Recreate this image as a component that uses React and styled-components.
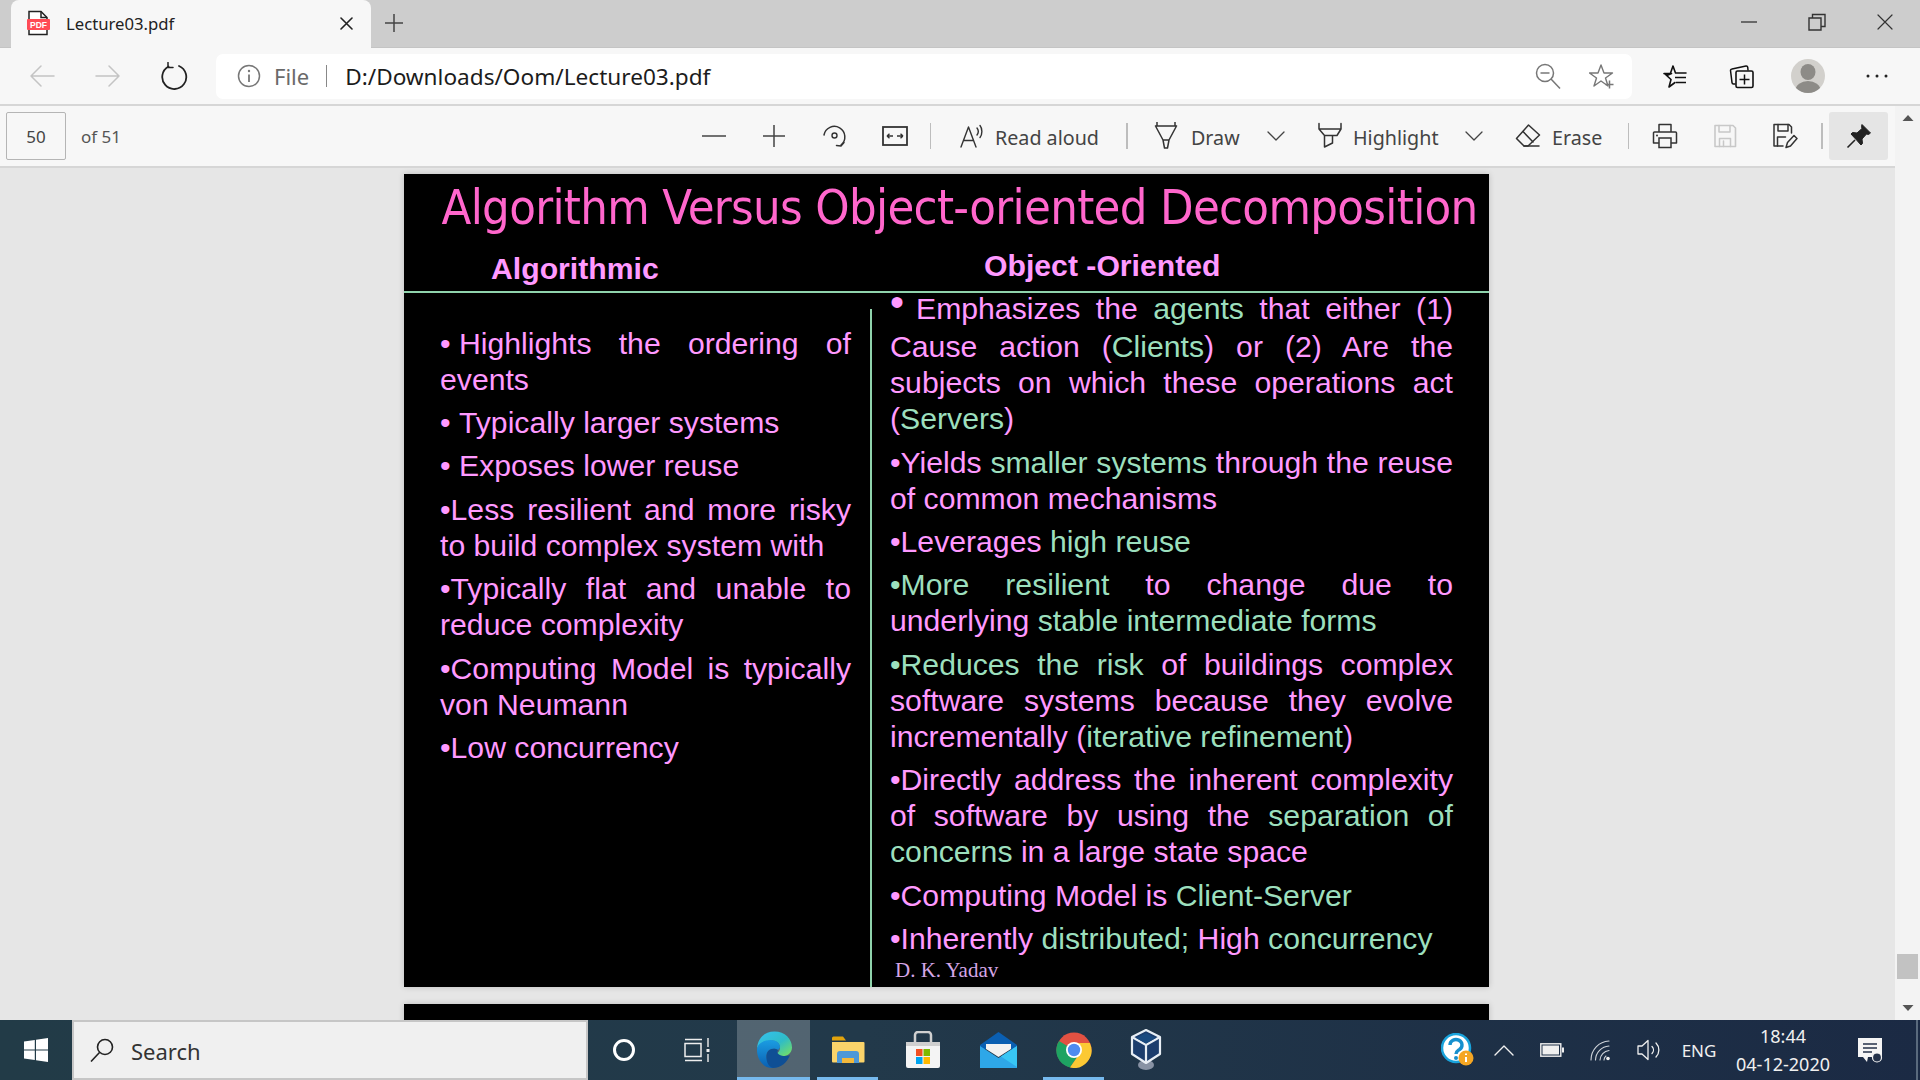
import React from "react";
import styled, { createGlobalStyle } from "styled-components";

const Global = createGlobalStyle`
  html, body { margin: 0; padding: 0; height: 100%; overflow: hidden; background: #e6e6e6; }
  #root { height: 100%; }
  * { box-sizing: border-box; }
`;

const UI = `"Noto Sans", "Open Sans", sans-serif`;
const PINK = "#ff99ff";
const GREEN = "#9cdfbd";

const Shell = styled.div`
  width: 1920px; height: 1080px; display: flex; flex-direction: column; overflow: hidden;
  font-family: ${UI}; color: #222;
`;

/* ---------- tab strip ---------- */
const TabStrip = styled.div`
  height: 48px; flex: none; background: #cdcdcd; display: flex; align-items: stretch; padding-left: 11px;
  border-bottom: 1px solid #c4c4c4;
`;
const Tab = styled.div`
  width: 360px; background: #f7f7f7; border-radius: 8px 8px 0 0; display: flex; align-items: center;
  padding: 0 18px 2px 15px; margin-bottom: -1px;
`;
const TabTitle = styled.span`
  font-size: 16.7px; margin-left: 15px; flex: 1; color: #222;
`;
const NewTab = styled.div`
  width: 46px; display: flex; align-items: center; justify-content: center; padding-bottom: 2px;
`;
const WindowButtons = styled.div`
  margin-left: auto; display: flex; align-items: flex-start; padding-right: 1px;
`;
const WinBtn = styled.div`
  width: 68px; height: 43px; display: flex; align-items: center; justify-content: center;
`;

/* ---------- address bar ---------- */
const AddressRow = styled.div`
  height: 58px; flex: none; background: #f7f7f7; display: flex; align-items: center;
  border-bottom: 2px solid #d6d6d6;
`;
const NavBtn = styled.div`
  width: 66px; height: 44px; display: flex; align-items: center; justify-content: center; flex: none;
`;
const NavGroup = styled.div`
  display: flex; padding-left: 9px; margin-right: 9px;
`;
const Omnibox = styled.div`
  width: 1416px; height: 45px; background: #fff; border-radius: 7px; display: flex; align-items: center;
  padding: 0 3px 0 21px; flex: none;
`;
const FileLabel = styled.span`
  font-size: 22px; color: #6a6a6a; margin-left: 13px;
`;
const OmniSep = styled.div`
  width: 1px; height: 22px; background: #888; margin: 0 18px 0 17px;
`;
const Url = styled.span`
  font-size: 22.6px; color: #1c1c1c; flex: 1;
`;
const OmniIcon = styled.div`
  width: 54px; display: flex; justify-content: center; flex: none;
`;
const RowIcons = styled.div`
  display: flex; align-items: center; padding-left: 10px;
`;
const RowIcon = styled.div`
  width: ${p => p.$w || 66.5}px; display: flex; justify-content: center; flex: none;
`;

/* ---------- body: toolbar + pages, with the scrollbar beside both ---------- */
const Workspace = styled.div`
  flex: 1; min-height: 0; display: flex;
`;
const MainCol = styled.div`
  flex: 1; min-width: 0; display: flex; flex-direction: column;
`;

/* ---------- pdf toolbar ---------- */
const PdfBar = styled.div`
  height: 62px; flex: none; background: #f7f7f7; display: flex; align-items: center;
  border-bottom: 2px solid #d6d6d6; padding: 0 7px 0 6px;
`;
const PageInput = styled.div`
  width: 60px; height: 48px; background: #f7f7f7; border: 1px solid #b5b5b5; border-radius: 2px;
  display: flex; align-items: center; justify-content: center; font-size: 17px; color: #444;
`;
const PageCount = styled.span`
  font-size: 17px; color: #555; margin-left: 15px;
`;
const ToolGroup = styled.div`
  margin-left: auto; display: flex; align-items: center; height: 48px;
`;
const ToolBtn = styled.div`
  width: ${p => p.$w}px; height: 48px; flex: none; display: flex; align-items: center; justify-content: center;
  background: ${p => (p.$active ? "#e5e5e5" : "transparent")}; border-radius: 3px;
`;
const TextTool = styled.div`
  width: ${p => p.$w}px; padding-left: ${p => p.$pad}px; height: 48px; flex: none; display: flex; align-items: center;
  gap: ${p => p.$gap}px; font-size: 19.7px; color: #444;
`;
const ToolLabel = styled.span`
  position: relative; top: 1px;
`;
const ToolSep = styled.div`
  width: ${p => p.$w || 1}px; height: 26px; background: #bdbdbd; flex: none; margin: 0 6px;
`;

/* ---------- viewer ---------- */
const Pages = styled.div`
  flex: 1; min-height: 0; overflow: hidden; background: #e6e6e6; display: flex; flex-direction: column; align-items: center;
  gap: 17px; padding: 6px 2px 0 0;
`;
const Slide = styled.div`
  width: 1085px; height: ${p => p.$h || 813}px; background: #000; flex: none; display: flex; flex-direction: column;
  box-shadow: 0 0 6px rgba(0,0,0,.18); font-family: "Liberation Sans", Arial, sans-serif; color: ${PINK};
`;
const SlideHead = styled.div`
  height: 119px; flex: none; border-bottom: 2px solid #8fd3ac;
`;
const Title = styled.h1`
  margin: 0; padding: 1px 0 0 37.5px; height: 65px; line-height: 64px; font-size: 48.5px; font-weight: 400; white-space: nowrap;
  letter-spacing: -.68px; font-family: "DejaVu Sans", sans-serif; font-stretch: condensed; color: #ff66cc;
`;
const SubRow = styled.div`
  display: flex;
`;
const Sub = styled.h2`
  margin: ${p => p.$top}px 0 0 0; padding-left: ${p => p.$pad}px; width: ${p => p.$w}px; font-size: 30.2px; line-height: 40px; font-weight: 700;
`;
const Columns = styled.div`
  flex: 1; min-height: 0; display: flex;
`;
const LeftCol = styled.div`
  width: 466px; flex: none; padding: 32.6px 19px 0 36px;
`;
const Rule = styled.div`
  width: 2px; flex: none; background: #8fd3ac; margin-top: 16px;
`;
const RightCol = styled.div`
  flex: 1; padding: 0 36px 0 18px; margin-top: -2px;
`;
const Item = styled.p`
  margin: 0 0 7.4px; font-size: 30.2px; line-height: 36px; text-align: justify; color: ${PINK};
`;
const LeadLine = styled(Item)`
  margin-bottom: 2.3px; text-align-last: justify;
`;
const G = styled.span`
  color: ${GREEN};
`;
const Dot = styled.span`
  display: inline-block; width: ${p => p.$w}px;
`;
const BigDot = styled.span`
  display: inline-block; width: 26px; font-size: 40px; line-height: 0; vertical-align: 3px;
`;
const Credit = styled.div`
  font-family: "Liberation Serif", "Times New Roman", serif; font-size: 21px; line-height: 24px; color: #d5a6e6;
  margin: -6px 0 0 5px;
`;

const Scrollbar = styled.div`
  width: 25px; flex: none; background: #f3f3f3; display: flex; flex-direction: column; align-items: center;
`;
const ScrollArrow = styled.div`
  height: 24px; flex: none; display: flex; align-items: center; justify-content: center;
`;
const ScrollThumb = styled.div`
  width: 21px; height: 25px; background: #c2c2c2; margin-top: auto; margin-bottom: 17px;
`;

/* ---------- taskbar ---------- */
const Taskbar = styled.div`
  height: 60px; flex: none; display: flex; align-items: stretch; position: relative; z-index: 2;
  background: linear-gradient(90deg, #223b47 0%, #22394a 45%, #1b2a44 100%); color: #fff;
`;
const StartBtn = styled.div`
  width: 72px; flex: none; display: flex; align-items: center; justify-content: center;
`;
const SearchBox = styled.div`
  width: 516px; flex: none; background: #f0f0f0; border: 2px solid #c6c6c6; display: flex; align-items: center;
  padding-left: 16px; gap: 17px; font-size: 22px; color: #333;
`;
const SearchLabel = styled.span`
  position: relative; top: 1px;
`;
const TaskIcon = styled.div`
  width: ${p => p.$w}px; flex: none; display: flex; align-items: center; justify-content: center; position: relative;
  padding-right: ${p => p.$pr || 0}px;
  background: ${p => (p.$on ? "rgba(255,255,255,.22)" : "transparent")};
  ${p => p.$line ? `&::after { content: ""; position: absolute; left: ${p.$on ? 0 : "7px"}; right: ${p.$on ? 0 : "7px"}; bottom: 0; height: 3px; background: #76b9ed; }` : ""}
`;
const Tray = styled.div`
  margin-left: auto; display: flex; align-items: center; padding-right: 2px;
`;
const TrayItem = styled.div`
  width: ${p => p.$w}px; flex: none; display: flex; align-items: center; justify-content: center;
  padding-left: ${p => p.$pl || 0}px; padding-right: ${p => p.$pr || 0}px;
`;
const Lang = styled.span`
  font-size: 17px; color: #f0f0f0;
`;
const Clock = styled.div`
  width: 110px; flex: none; display: flex; flex-direction: column; align-items: center; font-size: 18px; line-height: 28px; color: #f0f0f0;
`;
const NotifyEdge = styled.div`
  width: 2px; height: 100%; background: #5a6a7d; flex: none; margin-left: 15px;
`;

/* ---------- icons ---------- */
const Svg = ({ s = 24, w, h, vb, children, ...rest }) => (
  <svg width={w || s} height={h || s} viewBox={vb || `0 0 ${s} ${s}`} fill="none" {...rest}>{children}</svg>
);
const line = (c, sw = 1.5) => ({ stroke: c, strokeWidth: sw, fill: "none", strokeLinecap: "round", strokeLinejoin: "round" });
const D = "#333";

const PdfIcon = () => (
  <Svg w={25} h={26} vb="0 0 25 26">
    <path d="M3 24.5V1.5h12l6 6v17z" fill="#fff" stroke="#222" strokeWidth="1.5" />
    <path d="M15 1.5v6h6" stroke="#222" strokeWidth="1.5" />
    <rect x="1" y="9" width="23" height="11" rx="1" fill="#ff4b55" />
    <text x="12.5" y="18" textAnchor="middle" fontSize="8.5" fontWeight="700" fill="#fff" fontFamily="Liberation Sans">PDF</text>
  </Svg>
);
const Cross = ({ s = 14, c = "#222", sw = 1.6 }) => (
  <Svg s={s}><path d={`M1 1L${s - 1} ${s - 1}M${s - 1} 1L1 ${s - 1}`} {...line(c, sw)} /></Svg>
);
const Plus = ({ s = 22, c = "#444", sw = 1.5 }) => (
  <Svg s={s}><path d={`M${s / 2} 1V${s - 1}M1 ${s / 2}H${s - 1}`} stroke={c} strokeWidth={sw} /></Svg>
);
const Minus = ({ s = 24, c = "#444", sw = 1.5 }) => (
  <Svg s={s}><path d={`M0 ${s / 2}H${s}`} stroke={c} strokeWidth={sw} /></Svg>
);
const Restore = () => (
  <Svg s={18}><path d="M1 5h12v12H1zM4.5 5V1.500h12.500V13.500H13" stroke="#333" strokeWidth="1.400" /></Svg>
);
const Arrow = ({ flip }) => (
  <Svg s={26} style={{ transform: flip ? "scaleX(-1)" : "none" }}>
    <path d="M25 13H2M12 3L2 13l10 10" {...line("#c4c4c4", 1.5)} />
  </Svg>
);
const Refresh = () => (
  <Svg s={28}>
    <path d="M8.500 4.500A12 12 0 1 0 19 4" {...line("#222", 1.8)} />
    <path d="M8 0.500V5.500H13" {...line("#222", 1.5)} />
  </Svg>
);
const Info = () => (
  <Svg s={24}>
    <circle cx="12" cy="12" r="10.500" stroke="#777" strokeWidth="1.500" />
    <path d="M12 10.500V18" stroke="#777" strokeWidth="1.800" />
    <circle cx="12" cy="7" r="1.200" fill="#777" />
  </Svg>
);
const ZoomOut = () => (
  <Svg s={26}>
    <circle cx="10" cy="10" r="8.500" stroke="#777" strokeWidth="1.500" />
    <path d="M16 16L25 25.500" stroke="#777" strokeWidth="1.500" />
    <path d="M5.500 10h9" stroke="#777" strokeWidth="1.500" />
  </Svg>
);
const StarPlus = () => (
  <Svg s={26}>
    <path d="M12 2l3 8h8.500l-7 5 2.500 8-7-5-7 5 2.500-8-7-5H9z" {...line("#777", 1.400)} />
    <path d="M20.500 17.500v8M16.500 21.500h8" stroke="#777" strokeWidth="1.500" />
  </Svg>
);
const Favorites = () => (
  <Svg s={26}>
    <path d="M11 3l2.500 7H24M6 12l-4-1.500h7.500zM7 24l2-7.500L3 11M7 24l6-4.500" {...line("#111", 1.600)} />
    <path d="M13 14.500H24M14 19.500H24" stroke="#111" strokeWidth="1.600" />
    <path d="M11 3L8.500 10" stroke="#111" strokeWidth="1.600" />
  </Svg>
);
const Collections = () => (
  <Svg s={26}>
    <path d="M6 21H4.500a1.500 1.500 0 0 1-1.500-1.300L1.500 7.500A1.500 1.500 0 0 1 3 6l14-3a1.500 1.500 0 0 1 1.700 1.200L19 7" {...line("#111", 1.500)} />
    <rect x="7" y="8" width="17" height="16.500" rx="1.500" stroke="#111" strokeWidth="1.600" />
    <path d="M15.500 11.500v10M10.500 16.500h10" stroke="#111" strokeWidth="1.500" />
  </Svg>
);
const Avatar = () => (
  <Svg s={34}>
    <defs><clipPath id="av"><circle cx="17" cy="17" r="17" /></clipPath></defs>
    <circle cx="17" cy="17" r="17" fill="#d2d0cc" />
    <g clipPath="url(#av)">
      <ellipse cx="17" cy="13" rx="7.500" ry="8" fill="#8d8b87" />
      <ellipse cx="17" cy="31" rx="12.500" ry="9" fill="#8d8b87" />
    </g>
  </Svg>
);
const Dots = () => (
  <Svg s={24}>
    <circle cx="3" cy="12" r="1.500" fill="#222" /><circle cx="12" cy="12" r="1.500" fill="#222" /><circle cx="21" cy="12" r="1.500" fill="#222" />
  </Svg>
);
const RotateIcon = () => (
  <Svg s={26}>
    <path d="M2 12A10.500 10.500 0 1 1 19 22" {...line(D, 1.500)} />
    <circle cx="12.500" cy="12.500" r="2.500" stroke={D} strokeWidth="1.400" />
    <path d="M22 19.500l-3 3.500-4.500-.5" {...line(D, 1.500)} />
  </Svg>
);
const FitIcon = () => (
  <Svg w={26} h={24} vb="0 0 26 24">
    <rect x="1" y="3" width="24" height="18" stroke={D} strokeWidth="1.800" />
    <path d="M5 12h6M5 12l2.500-2.200M5 12l2.500 2.200M21 12h-6M21 12l-2.500-2.200M21 12l-2.500 2.200" stroke={D} strokeWidth="1.400" />
  </Svg>
);
const ReadIcon = () => (
  <Svg s={24}>
    <path d="M1 23L8.500 3 16 23M3.500 16.500H13.500" {...line(D, 1.400)} />
    <path d="M17 4c1.500 2 1.500 5 0 7M20 1.500c2.500 3 2.500 9 0 12" {...line(D, 1.400)} />
  </Svg>
);
const DrawIcon = () => (
  <Svg w={24} h={28} vb="0 0 24 28">
    <path d="M1.500 4L9 18h6l7.500-14M1.500 4H22.500M3 0v4M21 0v4M9 18l1.500 8h3l1.500-8" {...line(D, 1.500)} />
  </Svg>
);
const HighlightIcon = () => (
  <Svg w={26} h={28} vb="0 0 26 28">
    <path d="M2 1.500V7h22V1.500M2 7l5.500 6.500H20L24 7M7.500 13.500V25l8-4v-7.500" {...line(D, 1.500)} />
  </Svg>
);
const Chevron = () => (
  <Svg w={18} h={10} vb="0 0 18 10"><path d="M1 1l8 8 8-8" {...line("#444", 1.300)} /></Svg>
);
const EraseIcon = () => (
  <Svg s={26}>
    <path d="M13.500 2L24.500 12 13 23H9L1.500 15.500z" {...line(D, 1.500)} />
    <path d="M8 8.500L18 19M9 23h15" {...line(D, 1.500)} />
  </Svg>
);
const PrintIcon = () => (
  <Svg s={26}>
    <path d="M7 9V1.500h12V9M6.500 20H1.500V10a1 1 0 0 1 1-1h21a1 1 0 0 1 1 1v10h-5" {...line(D, 1.500)} />
    <rect x="7" y="15" width="12" height="9.500" stroke={D} strokeWidth="1.500" />
    <circle cx="5" cy="12.500" r="1" fill={D} />
  </Svg>
);
const SaveIcon = ({ c = "#c8c8c8" }) => (
  <Svg s={24}>
    <path d="M2 1.500h18l2.500 2.500v18.500H2z" {...line(c, 1.600)} />
    <path d="M6 1.500V8h11V1.500M6.500 22.500V14.500h11v8M10.500 17v5.500" {...line(c, 1.500)} />
  </Svg>
);
const SaveAsIcon = () => (
  <Svg s={26}>
    <path d="M11 23H2V1.500h15l2.500 2.500V10" {...line(D, 1.500)} />
    <path d="M6 1.500V8h10V1.500M5.500 23V14h8" {...line(D, 1.500)} />
    <path d="M14 24.500l1.500-5L22 12.500l3 3-6.500 7.500z" {...line(D, 1.500)} />
  </Svg>
);
const PinIcon = () => (
  <Svg s={26}>
    <path d="M16 1.500l8.500 8.500-2 1.500-2-.5-4.500 5 .5 4.500-1.500 1.500-4-4.500L5 11l1.500-1.500 4.500.5 5-4.500-.5-2z" fill="#222" stroke="#222" strokeWidth="1" strokeLinejoin="round" />
    <path d="M9 17L1.500 24.500" stroke="#222" strokeWidth="1.600" />
  </Svg>
);
const Tri = ({ down }) => (
  <Svg w={12} h={8} vb="0 0 12 8" style={{ transform: down ? "rotate(180deg)" : "none" }}>
    <path d="M6 1l5.500 6H.5z" fill="#555" />
  </Svg>
);
const WinLogo = () => (
  <Svg s={24}>
    <path d="M0 3.500l10.800-1.500v9.500H0zM12 1.800L24 0v11.500H12zM0 12.500h10.800V22L0 20.500zM12 12.500h12V24l-12-1.800z" fill="#fff" />
  </Svg>
);
const SearchGlass = () => (
  <Svg s={24}>
    <circle cx="15" cy="9" r="7.500" stroke="#222" strokeWidth="1.600" />
    <path d="M9.500 14.500L1 23.500" stroke="#222" strokeWidth="1.600" />
  </Svg>
);
const Cortana = () => (
  <Svg s={24}><circle cx="12" cy="12" r="9.500" stroke="#fff" strokeWidth="3" /></Svg>
);
const TaskView = () => (
  <Svg s={26}>
    <path d="M1 2.500h17M1 23.500h17" stroke="#eee" strokeWidth="1.400" />
    <rect x="1" y="6.500" width="16" height="13" stroke="#eee" strokeWidth="1.500" />
    <path d="M24 1v9" stroke="#eee" strokeWidth="1.400" />
    <rect x="22.500" y="12" width="3" height="3" fill="#eee" />
    <path d="M24 17v8" stroke="#eee" strokeWidth="1.400" />
  </Svg>
);
const Edge = () => (
  <Svg s={38}>
    <defs>
      <linearGradient id="e1" x1="0" y1="0" x2="1" y2="1"><stop offset="0" stopColor="#35c1f1" /><stop offset=".55" stopColor="#2fbcc7" /><stop offset="1" stopColor="#7ce25a" /></linearGradient>
      <linearGradient id="e2" x1="0" y1="0" x2="0" y2="1"><stop offset="0" stopColor="#1b9de2" /><stop offset="1" stopColor="#0a5fb2" /></linearGradient>
    </defs>
    <path d="M2 19C2 8 9 .5 19.500 .5 30 .5 37 8 37 16.500c0 6-5 8.500-9 8.500-3.500 0-6-1-6-2 0-1.500 3-2 3-6.500 0-4-3.500-7-8-7C8 9.500 2 14 2 19z" fill="url(#e1)" />
    <path d="M2 19c0-6 6-10 14-10 5 0 9 3 9 7 0 1-1 2-2 3-3-2-9-2-11 3-2 6 2 12 7 15C9 38 2 29 2 19z" fill="url(#e2)" />
    <path d="M12 22c2-5 8-5 11-3-1 1.500-1 3 1 4.500 3 2 8 2 11 .5-2.500 7-9 13-17 13-5-1-8-9-6-15z" fill="#0f4f95" />
  </Svg>
);
const Folder = () => (
  <Svg w={34} h={28} vb="0 0 34 28">
    <path d="M1 2a1.500 1.500 0 0 1 1.500-1.500H12l3 4H1z" fill="#e2a30c" />
    <path d="M1 6h31.500a1 1 0 0 1 1 1v18.500a1 1 0 0 1-1 1H2a1 1 0 0 1-1-1z" fill="#fbd46a" />
    <path d="M6 27v-9a3 3 0 0 1 3-3h16a3 3 0 0 1 3 3v9h-5v-5H11v5z" fill="#4d98d8" />
    <rect x="11" y="22" width="12" height="5" fill="#f3b93c" />
  </Svg>
);
const Store = () => (
  <Svg w={36} h={38} vb="0 0 36 38">
    <path d="M10 11V4a3 3 0 0 1 3-3h10a3 3 0 0 1 3 3v7" stroke="#d0d0d0" strokeWidth="2.500" />
    <path d="M1 11h34v24a2 2 0 0 1-2 2H3a2 2 0 0 1-2-2z" fill="#f4f4f4" />
    <rect x="1" y="11" width="34" height="4" fill="#cfcfcf" />
    <rect x="11" y="18" width="6.500" height="7" fill="#f25022" /><rect x="18.500" y="18" width="6.500" height="7" fill="#7fba00" />
    <rect x="11" y="26" width="6.500" height="7" fill="#00a4ef" /><rect x="18.500" y="26" width="6.500" height="7" fill="#ffb900" />
  </Svg>
);
const Mail = () => (
  <Svg w={37} h={36} vb="0 0 37 36">
    <path d="M0 13L18.500 0 37 13v4H0z" fill="#0a5fb2" />
    <path d="M6 12h25v5l-12.500 8L6 17z" fill="#f2f2f2" />
    <path d="M0 14l18.500 12L37 14v22H0z" fill="#2ea7e8" />
    <path d="M37 14L21 24.500 37 35z" fill="#38c6f4" />
  </Svg>
);
const Chrome = () => (
  <Svg s={36}>
    <circle cx="18" cy="18" r="17.500" fill="#e25142" />
    <path d="M18 18L3 9a17.500 17.500 0 0 0 11 26.500l7-10z" fill="#1ea362" />
    <path d="M18 11h15.800a17.500 17.500 0 0 1-19.800 24.500L22 24z" fill="#fcc934" />
    <circle cx="18" cy="18" r="8" fill="#fff" /><circle cx="18" cy="18" r="6.200" fill="#4d8bf0" />
  </Svg>
);
const VBox = () => (
  <Svg w={32} h={42} vb="0 0 32 42">
    <ellipse cx="16" cy="36" rx="8" ry="5" fill="#8892a4" />
    <path d="M16 1L30 8v17l-14 9-14-9V8z" fill="#1c3d6d" stroke="#e8eef5" strokeWidth="2.200" strokeLinejoin="round" />
    <path d="M2 8l14 8 14-8M16 16v18" stroke="#e8eef5" strokeWidth="2.200" />
    <path d="M16 4l10 5-10 5.500L6 9z" fill="#1a4a80" />
  </Svg>
);
const HelpBadge = () => (
  <Svg s={34}>
    <circle cx="15" cy="15" r="14" fill="#fff" />
    <circle cx="15" cy="15" r="14" stroke="#19a3dc" strokeWidth="2.500" />
    <path d="M9 12a6 5.500 0 1 1 9.500 4.500c-2 1.500-3.500 2-3.500 4.500" stroke="#1790ce" strokeWidth="3.400" fill="none" />
    <circle cx="15" cy="25" r="2" fill="#1790ce" />
    <circle cx="25" cy="25" r="7.500" fill="#f5a623" />
    <path d="M25 24v5M25 20.500v1.600" stroke="#fff" strokeWidth="2" />
  </Svg>
);
const Caret = () => (
  <Svg w={20} h={11} vb="0 0 20 11"><path d="M1 10l9-9 9 9" {...line("#f0f0f0", 1.400)} /></Svg>
);
const Battery = () => (
  <Svg w={24} h={14} vb="0 0 24 14">
    <rect x=".8" y=".8" width="20" height="12.400" stroke="#f0f0f0" strokeWidth="1.400" />
    <rect x="2.500" y="2.500" width="16.500" height="9" fill="#f0f0f0" />
    <rect x="22" y="4.500" width="2" height="5" fill="#f0f0f0" />
  </Svg>
);
const Wifi = () => (
  <Svg s={22}>
    <path d="M1 21A19 19 0 0 1 19 2M5.500 21A14.500 14.500 0 0 1 19 7M10 21a10 10 0 0 1 9-9.500M14 21a5.500 5.500 0 0 1 2-4" {...line("#cfd4da", 1.100)} />
    <circle cx="18" cy="19.500" r="1.800" fill="#f0f0f0" />
  </Svg>
);
const Volume = () => (
  <Svg w={24} h={22} vb="0 0 24 22">
    <path d="M1 7h4l6-5.500v19L5 15H1z" {...line("#f0f0f0", 1.300)} />
    <path d="M15 7.500a5 5 0 0 1 0 7M19 4a10 10 0 0 1 0 14" {...line("#f0f0f0", 1.300)} />
  </Svg>
);
const Notify = () => (
  <Svg w={26} h={26} vb="0 0 26 26">
    <path d="M1 1h24v19H11l-1 5-4-5H1z" fill="#f5f5f5" />
    <path d="M6 7h14M6 11h14M6 15h9" stroke="#24324a" strokeWidth="1.400" />
    <circle cx="20" cy="20.500" r="4.500" fill="#24324a" stroke="#f5f5f5" strokeWidth="1.200" />
  </Svg>
);

export default function App() {
  return (
    <Shell>
      <Global />
      <TabStrip>
        <Tab>
          <PdfIcon />
          <TabTitle>Lecture03.pdf</TabTitle>
          <Cross s={13} />
        </Tab>
        <NewTab><Plus s={20} /></NewTab>
        <WindowButtons>
          <WinBtn><Minus s={16} c="#333" sw={1.300} /></WinBtn>
          <WinBtn><Restore /></WinBtn>
          <WinBtn><Cross s={16} c="#333" sw={1.200} /></WinBtn>
        </WindowButtons>
      </TabStrip>

      <AddressRow>
        <NavGroup>
          <NavBtn><Arrow /></NavBtn>
          <NavBtn><Arrow flip /></NavBtn>
          <NavBtn><Refresh /></NavBtn>
        </NavGroup>
        <Omnibox>
          <Info />
          <FileLabel>File</FileLabel>
          <OmniSep />
          <Url>D:/Downloads/Oom/Lecture03.pdf</Url>
          <OmniIcon><ZoomOut /></OmniIcon>
          <OmniIcon><StarPlus /></OmniIcon>
        </Omnibox>
        <RowIcons>
          <RowIcon><Favorites /></RowIcon>
          <RowIcon><Collections /></RowIcon>
          <RowIcon><Avatar /></RowIcon>
          <RowIcon $w={71}><Dots /></RowIcon>
        </RowIcons>
      </AddressRow>

      <Workspace>
        <MainCol>
          <PdfBar>
            <PageInput>50</PageInput>
            <PageCount>of 51</PageCount>
            <ToolGroup>
              <ToolBtn $w={60}><Minus /></ToolBtn>
              <ToolBtn $w={60}><Plus s={24} /></ToolBtn>
              <ToolBtn $w={61}><RotateIcon /></ToolBtn>
              <ToolBtn $w={59}><FitIcon /></ToolBtn>
              <ToolSep />
              <TextTool $w={183} $pad={23} $gap={11}><ReadIcon /><ToolLabel>Read aloud</ToolLabel></TextTool>
              <ToolSep $w={2} />
              <TextTool $w={117} $pad={20} $gap={13}><DrawIcon /><ToolLabel>Draw</ToolLabel></TextTool>
              <ToolBtn $w={50}><Chevron /></ToolBtn>
              <TextTool $w={148} $pad={16} $gap={10}><HighlightIcon /><ToolLabel>Highlight</ToolLabel></TextTool>
              <ToolBtn $w={50}><Chevron /></ToolBtn>
              <TextTool $w={123} $pad={16} $gap={11}><EraseIcon /><ToolLabel>Erase</ToolLabel></TextTool>
              <ToolSep />
              <ToolBtn $w={60}><PrintIcon /></ToolBtn>
              <ToolBtn $w={60}><SaveIcon /></ToolBtn>
              <ToolBtn $w={60}><SaveAsIcon /></ToolBtn>
              <ToolSep $w={2} />
              <ToolBtn $w={59} $active><PinIcon /></ToolBtn>
            </ToolGroup>
          </PdfBar>

          <Pages>
            <Slide>
              <SlideHead>
                <Title>Algorithm Versus Object-oriented Decomposition</Title>
                <SubRow>
                  <Sub $w={493} $pad={87} $top={10}>Algorithmic</Sub>
                  <Sub $w={500} $pad={87} $top={6.5}>Object -Oriented</Sub>
                </SubRow>
              </SlideHead>
              <Columns>
                <LeftCol>
                  <Item><Dot $w={19}>•</Dot>Highlights the ordering of events</Item>
                  <Item><Dot $w={19}>•</Dot>Typically larger systems</Item>
                  <Item><Dot $w={19}>•</Dot>Exposes lower reuse</Item>
                  <Item>•Less resilient and more risky to build complex system with</Item>
                  <Item>•Typically flat and unable to reduce complexity</Item>
                  <Item>•Computing Model is typically von Neumann</Item>
                  <Item>•Low concurrency</Item>
                </LeftCol>
                <Rule />
                <RightCol>
                  <LeadLine><BigDot>•</BigDot>Emphasizes the <G>agents</G> that either (1)</LeadLine>
                  <Item>Cause action (<G>Clients</G>) or (2) Are the subjects on which these operations act (<G>Servers</G>)</Item>
                  <Item>•Yields <G>smaller systems</G> through the reuse of common mechanisms</Item>
                  <Item>•Leverages <G>high reuse</G></Item>
                  <Item><G>•More resilient</G> to change due to underlying <G>stable intermediate forms</G></Item>
                  <Item><G>•Reduces the risk</G> of buildings complex software systems because they evolve incrementally (<G>iterative refinement</G>)</Item>
                  <Item>•Directly address the inherent complexity of software by using the <G>separation of concerns</G> in a large state space</Item>
                  <Item>•Computing Model is <G>Client-Server</G></Item>
                  <Item>•Inherently <G>distributed;</G> High <G>concurrency</G></Item>
                  <Credit>D. K. Yadav</Credit>
                </RightCol>
              </Columns>
            </Slide>
            <Slide $h={300} />
          </Pages>
        </MainCol>
        <Scrollbar>
          <ScrollArrow><Tri /></ScrollArrow>
          <ScrollThumb />
          <ScrollArrow><Tri down /></ScrollArrow>
        </Scrollbar>
      </Workspace>

      <Taskbar>
        <StartBtn><WinLogo /></StartBtn>
        <SearchBox><SearchGlass /><SearchLabel>Search</SearchLabel></SearchBox>
        <TaskIcon $w={72}><Cortana /></TaskIcon>
        <TaskIcon $w={77} $pr={4}><TaskView /></TaskIcon>
        <TaskIcon $w={73} $on $line><Edge /></TaskIcon>
        <TaskIcon $w={75} $line><Folder /></TaskIcon>
        <TaskIcon $w={75}><Store /></TaskIcon>
        <TaskIcon $w={76}><Mail /></TaskIcon>
        <TaskIcon $w={75} $line><Chrome /></TaskIcon>
        <TaskIcon $w={70}><VBox /></TaskIcon>
        <Tray>
          <TrayItem $w={48} $pl={3}><HelpBadge /></TrayItem>
          <TrayItem $w={48}><Caret /></TrayItem>
          <TrayItem $w={48}><Battery /></TrayItem>
          <TrayItem $w={50}><Wifi /></TrayItem>
          <TrayItem $w={46}><Volume /></TrayItem>
          <TrayItem $w={56} $pr={2}><Lang>ENG</Lang></TrayItem>
          <Clock><span>18:44</span><span>04-12-2020</span></Clock>
          <TrayItem $w={63}><Notify /></TrayItem>
          <NotifyEdge />
        </Tray>
      </Taskbar>
    </Shell>
  );
}
